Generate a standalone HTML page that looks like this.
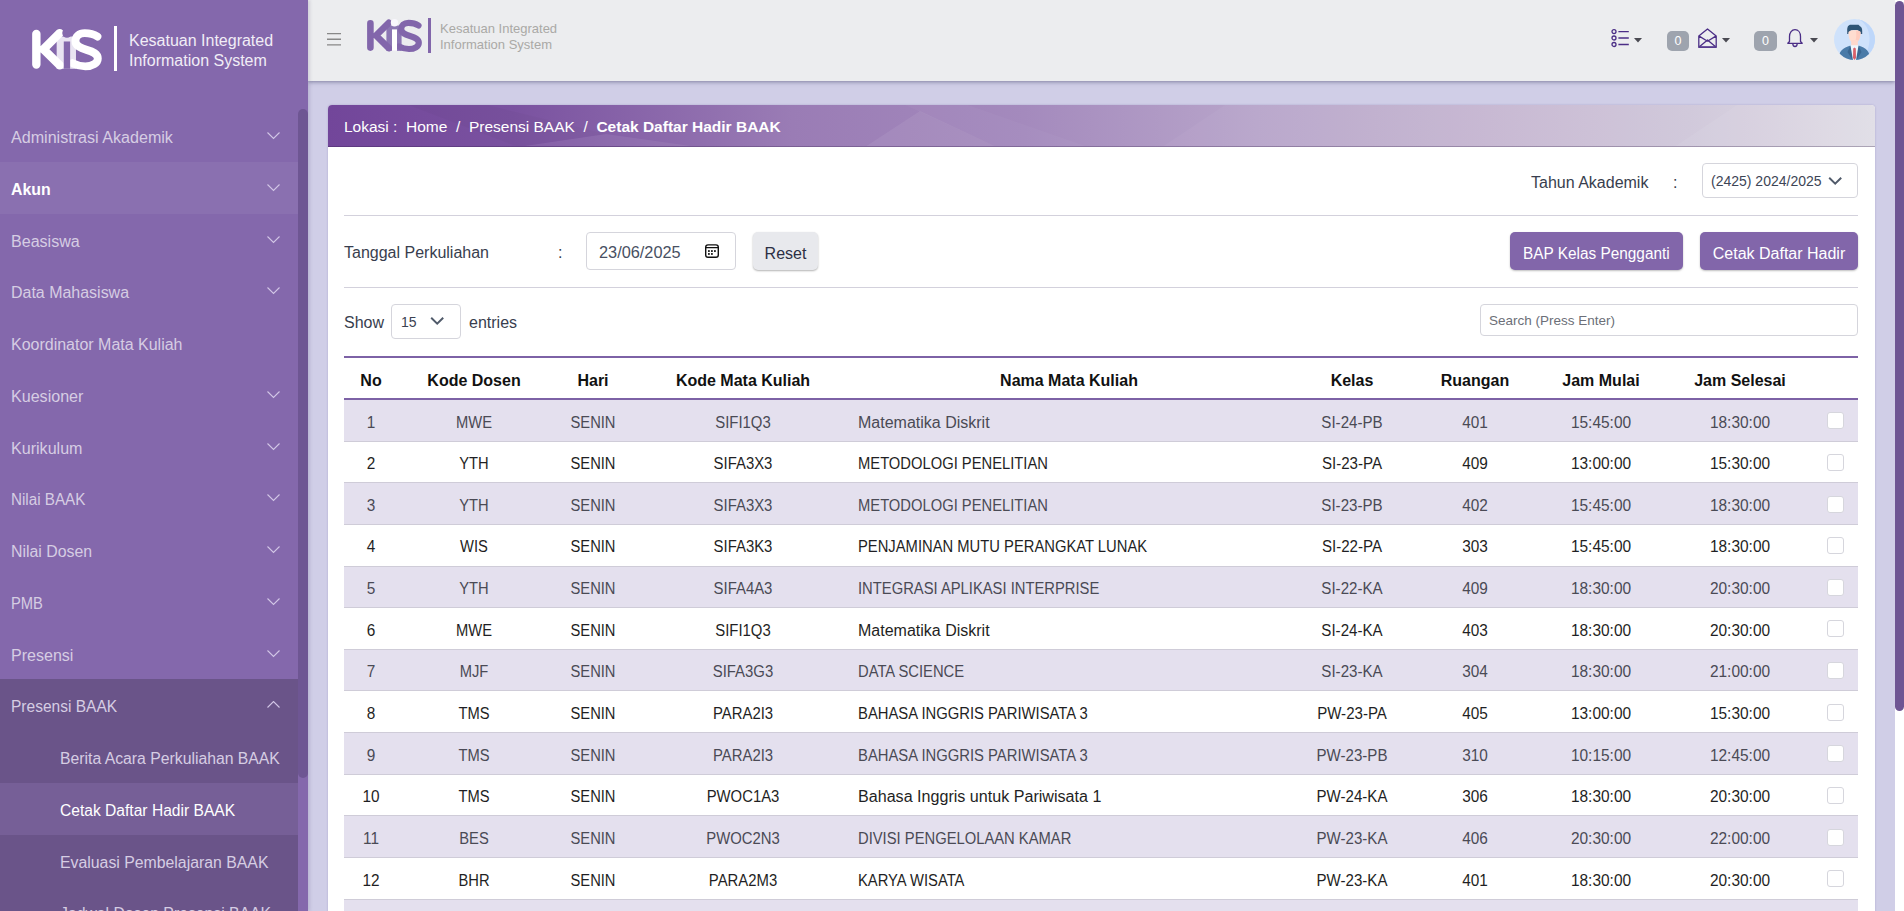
<!DOCTYPE html>
<html><head><meta charset="utf-8">
<style>
*{box-sizing:border-box;margin:0;padding:0}
html,body{width:1904px;height:911px;overflow:hidden}
body{font-family:"Liberation Sans",sans-serif;background:#d0cee7;position:relative;color:#212529}
.a{position:absolute;white-space:nowrap}
#sb{position:absolute;left:0;top:0;width:308px;height:911px;background:#8468ac;overflow:hidden;box-shadow:2px 0 3px rgba(60,50,100,.15);z-index:2}
.mi{position:absolute;left:0;width:298px;height:52px;font-size:16px}
.mi span{position:absolute;top:19px;white-space:nowrap;line-height:18px}
.mi svg{position:absolute}
#hdr{position:absolute;left:308px;top:0;width:1587px;height:81px;background:#ecedef;box-shadow:0 1px 4px rgba(50,50,90,.5)}
#vscroll{position:absolute;left:1895px;top:0;width:9px;height:911px;background:#fff}
#card{position:absolute;left:328px;top:105px;width:1547px;height:830px;background:#fff;border-radius:4px 4px 0 0;overflow:hidden;box-shadow:0 0 2px rgba(90,80,150,.35)}
#bc{position:absolute;left:0;top:0;width:1547px;height:42px;background:linear-gradient(90deg,#72469a 0%,#7a52a0 12%,#9a7cb5 30%,#a48abd 45%,#b8a5ca 60%,#c6b7d2 75%,#d0c7da 88%,#dfdce5 100%);border-bottom:1px solid rgba(40,20,60,.28);overflow:hidden}
.hl{position:absolute;left:16px;width:1514px;height:1px;background:#d3d1dc}
.btnp{position:absolute;background:#8266aa;color:#fff;border-radius:5px;font-size:16px;line-height:38px;padding-top:3px;text-align:center;box-shadow:0 1px 2px rgba(0,0,0,.25)}
.inp{position:absolute;border:1px solid #d5d5dc;border-radius:4px;background:#fff}
#tbl{position:absolute;left:16px;top:251px;width:1514px;height:600px}
.tr{position:absolute;left:0;width:1514px;height:41.64px;border-bottom:1px solid #cfccd8}
.td{position:absolute;top:14.5px;font-size:16px;line-height:16px;white-space:nowrap}
.td.c{width:200px;text-align:center}
.th{position:absolute;top:17px;font-size:16px;line-height:16px;font-weight:bold;color:#111;width:200px;text-align:center;white-space:nowrap}
.cb{position:absolute;top:12.3px;width:17px;height:17px;border:1px solid #d6d6dd;border-radius:3px;background:#fff}
</style></head><body>

<div id="sb">
  <svg class="a" style="left:31.8px;top:26.7px" width="92" height="48" viewBox="0 0 72.4 37.8">
    <rect x="19.4" y="7.5" width="15.2" height="25.4" fill="#e9e4f2"/>
    <path d="M3.4 5.4 V29.6 M9 17.5 L21.8 4.8 M9 17.5 L21.8 30.1" stroke="#fff" stroke-width="6.6" stroke-linecap="round" fill="none"/>
    <path d="M51.5 7.5 C48.5 5.5 45 4.8 41.5 4.8 C37 4.8 34.2 7.5 34.2 11 C34.2 15 38 16.5 43 18 C48 19.5 51.8 21 51.8 24.8 C51.8 28.5 47.5 31 42 31 C38 31 35 30 32 28.5" stroke="#fff" stroke-width="6.2" stroke-linecap="round" fill="none"/>
    <rect x="25" y="11.4" width="5" height="21.5" fill="#8468ac"/>
    <circle cx="27.5" cy="4.8" r="3.7" fill="#8468ac"/>
  </svg>
  <div class="a" style="left:114px;top:26px;width:3px;height:45px;background:#fff"></div>
  <div class="a" style="left:129px;top:31px;font-size:16px;line-height:19.5px;color:#f1edf6">Kesatuan Integrated<br>Information System</div>
  <div class="mi" style="top:110.00px;"><span style="left:11px;color:#d6cde3;font-weight:normal;transform:scaleX(1.006);transform-origin:0 0">Administrasi Akademik</span><svg width="14" height="8" style="left:267px;top:22px"><path d="M0.5 0.5 L6.5 6.5 L12.5 0.5" fill="none" stroke="#d2c6e6" stroke-width="1.1"/></svg></div>
<div class="mi" style="top:161.75px;background:#8a70b0;"><span style="left:11px;color:#ffffff;font-weight:bold;transform:scaleX(0.991);transform-origin:0 0">Akun</span><svg width="14" height="8" style="left:267px;top:22px"><path d="M0.5 0.5 L6.5 6.5 L12.5 0.5" fill="none" stroke="#d2c6e6" stroke-width="1.1"/></svg></div>
<div class="mi" style="top:213.50px;"><span style="left:11px;color:#d6cde3;font-weight:normal;transform:scaleX(1.004);transform-origin:0 0">Beasiswa</span><svg width="14" height="8" style="left:267px;top:22px"><path d="M0.5 0.5 L6.5 6.5 L12.5 0.5" fill="none" stroke="#d2c6e6" stroke-width="1.1"/></svg></div>
<div class="mi" style="top:265.25px;"><span style="left:11px;color:#d6cde3;font-weight:normal;transform:scaleX(0.998);transform-origin:0 0">Data Mahasiswa</span><svg width="14" height="8" style="left:267px;top:22px"><path d="M0.5 0.5 L6.5 6.5 L12.5 0.5" fill="none" stroke="#d2c6e6" stroke-width="1.1"/></svg></div>
<div class="mi" style="top:317.00px;"><span style="left:11px;color:#d6cde3;font-weight:normal;transform:scaleX(0.999);transform-origin:0 0">Koordinator Mata Kuliah</span></div>
<div class="mi" style="top:368.75px;"><span style="left:11px;color:#d6cde3;font-weight:normal;transform:scaleX(1.005);transform-origin:0 0">Kuesioner</span><svg width="14" height="8" style="left:267px;top:22px"><path d="M0.5 0.5 L6.5 6.5 L12.5 0.5" fill="none" stroke="#d2c6e6" stroke-width="1.1"/></svg></div>
<div class="mi" style="top:420.50px;"><span style="left:11px;color:#d6cde3;font-weight:normal;transform:scaleX(1.005);transform-origin:0 0">Kurikulum</span><svg width="14" height="8" style="left:267px;top:22px"><path d="M0.5 0.5 L6.5 6.5 L12.5 0.5" fill="none" stroke="#d2c6e6" stroke-width="1.1"/></svg></div>
<div class="mi" style="top:472.25px;"><span style="left:11px;color:#d6cde3;font-weight:normal;transform:scaleX(0.950);transform-origin:0 0">Nilai BAAK</span><svg width="14" height="8" style="left:267px;top:22px"><path d="M0.5 0.5 L6.5 6.5 L12.5 0.5" fill="none" stroke="#d2c6e6" stroke-width="1.1"/></svg></div>
<div class="mi" style="top:524.00px;"><span style="left:11px;color:#d6cde3;font-weight:normal;transform:scaleX(0.991);transform-origin:0 0">Nilai Dosen</span><svg width="14" height="8" style="left:267px;top:22px"><path d="M0.5 0.5 L6.5 6.5 L12.5 0.5" fill="none" stroke="#d2c6e6" stroke-width="1.1"/></svg></div>
<div class="mi" style="top:575.75px;"><span style="left:11px;color:#d6cde3;font-weight:normal;transform:scaleX(0.920);transform-origin:0 0">PMB</span><svg width="14" height="8" style="left:267px;top:22px"><path d="M0.5 0.5 L6.5 6.5 L12.5 0.5" fill="none" stroke="#d2c6e6" stroke-width="1.1"/></svg></div>
<div class="mi" style="top:627.50px;"><span style="left:11px;color:#d6cde3;font-weight:normal;transform:scaleX(1.003);transform-origin:0 0">Presensi</span><svg width="14" height="8" style="left:267px;top:22px"><path d="M0.5 0.5 L6.5 6.5 L12.5 0.5" fill="none" stroke="#d2c6e6" stroke-width="1.1"/></svg></div>
<div class="mi" style="top:679.25px;background:#6a5489;"><span style="left:11px;color:#d6cde3;font-weight:normal;transform:scaleX(0.970);transform-origin:0 0">Presensi BAAK</span><svg width="14" height="8" style="left:267px;top:22px"><path d="M0.5 6.5 L6.5 0.5 L12.5 6.5" fill="none" stroke="#d2c6e6" stroke-width="1.1"/></svg></div>
<div class="mi" style="top:731.00px;background:#6a5489;"><span style="left:60px;color:#d6cde3;font-weight:normal;transform:scaleX(0.985);transform-origin:0 0">Berita Acara Perkuliahan BAAK</span></div>
<div class="mi" style="top:782.75px;background:#765f97;"><span style="left:60px;color:#ffffff;font-weight:normal;transform:scaleX(0.975);transform-origin:0 0">Cetak Daftar Hadir BAAK</span></div>
<div class="mi" style="top:834.50px;background:#6a5489;"><span style="left:60px;color:#d6cde3;font-weight:normal;transform:scaleX(0.989);transform-origin:0 0">Evaluasi Pembelajaran BAAK</span></div>
<div class="mi" style="top:886.25px;background:#6a5489;"><span style="left:60px;color:#d6cde3;font-weight:normal;transform:scaleX(0.985);transform-origin:0 0">Jadwal Dosen Presensi BAAK</span></div>
  <div class="a" style="left:298px;top:109px;width:10px;height:669px;background:#6e5693;border-radius:5px"></div>
</div>

<div id="hdr">
  <svg class="a" style="left:18px;top:32px" width="16" height="14"><path d="M1 1.6H15M1 7.3H15M1 12.9H15" stroke="#888" stroke-width="1.4"/></svg>
  <svg class="a" style="left:59px;top:18px" width="64" height="36" viewBox="0 0 64 36">
    <rect x="19.4" y="7.5" width="15.2" height="25.4" fill="#8b76b3"/>
    <path d="M3.4 5.4 V29.6 M9 17.5 L21.8 4.8 M9 17.5 L21.8 30.1" stroke="#8266ab" stroke-width="6.6" stroke-linecap="round" fill="none"/>
    <path d="M51.5 7.5 C48.5 5.5 45 4.8 41.5 4.8 C37 4.8 34.2 7.5 34.2 11 C34.2 15 38 16.5 43 18 C48 19.5 51.8 21 51.8 24.8 C51.8 28.5 47.5 31 42 31 C38 31 35 30 32 28.5" stroke="#8266ab" stroke-width="6.2" stroke-linecap="round" fill="none"/>
    <rect x="25" y="11.4" width="5" height="21.5" fill="#ffffff"/>
    <circle cx="27.5" cy="4.8" r="3.7" fill="#f9f7fd"/>
    <rect x="61" y="0" width="3" height="35" fill="#8266ab"/>
  </svg>
  <div class="a" style="left:132px;top:21px;font-size:13px;line-height:15.5px;color:#aaa9a6">Kesatuan Integrated<br>Information System</div>

  <!-- list icon -->
  <svg class="a" style="left:1303px;top:27px" width="22" height="21">
    <g fill="none" stroke="#4b2e86" stroke-width="1.3"><circle cx="3" cy="4.6" r="2"/><circle cx="3" cy="11" r="2"/><circle cx="3" cy="17.5" r="2"/></g>
    <path d="M7.4 4.6H17.8M7.4 11H17.8M7.4 17.5H17.8" stroke="#4b2e86" stroke-width="1.4"/>
  </svg>
  <svg class="a" style="left:1326px;top:38px" width="9" height="6"><path d="M0 0H8L4 4.5Z" fill="#4a4a52"/></svg>
  <div class="a" style="left:1359px;top:31px;width:22px;height:20px;border-radius:5px;background:#9ea4ae;color:#fff;font-size:12.5px;line-height:21px;text-align:center">0</div>
  <svg class="a" style="left:1389px;top:28px" width="22" height="21"><path d="M1.8 19.3V7.9L10.5 1L19.2 7.9V19.3Z M1.8 7.9L10.5 13.2L19.2 7.9 M1.8 19.3L10.5 12L19.2 19.3" fill="none" stroke="#4b2e86" stroke-width="1.3" stroke-linejoin="round"/><path d="M1.8 19H19.2" stroke="#5a3f92" stroke-width="1.6"/></svg>
  <svg class="a" style="left:1414px;top:38px" width="9" height="6"><path d="M0 0H8L4 4.5Z" fill="#4a4a52"/></svg>
  <div class="a" style="left:1446px;top:31px;width:23px;height:20px;border-radius:5px;background:#9ea4ae;color:#fff;font-size:12.5px;line-height:21px;text-align:center">0</div>
  <svg class="a" style="left:1478px;top:28px" width="18" height="20">
    <path d="M3.5 13.5V8.5C3.5 4.5 5.8 1.6 9 1.6C12.2 1.6 14.5 4.5 14.5 8.5V13.5L16.2 15.3H1.8Z M6.8 15.5C6.8 17.5 7.8 18.5 9 18.5C10.2 18.5 11.2 17.5 11.2 15.5" fill="none" stroke="#4b2e86" stroke-width="1.3" stroke-linejoin="round"/>
  </svg>
  <svg class="a" style="left:1502px;top:38px" width="9" height="6"><path d="M0 0H8L4 4.5Z" fill="#4a4a52"/></svg>
  <svg class="a" style="left:1526px;top:19px" width="41" height="41" viewBox="0 0 41 41">
    <defs><clipPath id="cc"><circle cx="20.5" cy="20.5" r="20.5"/></clipPath></defs>
    <g clip-path="url(#cc)">
      <rect width="41" height="41" fill="#cfe2fb"/>
      <path d="M20.5 -1 C30 1 36 10 35.5 21 C35.2 28 33 34 30 38 L44 44 L44 -2Z" fill="#bed7fa"/>
      <path d="M13.2 12 C13.2 8 14 5.8 17 5.8 H24.5 L26 7.2 C27.6 8 28.2 9.5 28.2 12 V15 L26.5 15 C26 11.5 23.5 11 20.5 11 C17.5 11 15 11.5 14.5 15 L13.2 15Z" fill="#2f5677"/>
      <path d="M14.5 13 C14.5 19.5 16 23.5 20.3 23.6 C24.6 23.5 26.5 19.5 26.5 13 C25.5 11.5 23 11.2 20.5 11.2 C18 11.2 15.5 11.5 14.5 13Z" fill="#ffddd0"/>
      <path d="M22 11.5 C24.5 11.8 26.3 12.5 26.5 13 C26.5 19.5 24.6 23.5 20.3 23.6 C22.5 21 22.5 16 22 11.5Z" fill="#ffcdbf"/>
      <rect x="17.2" y="21" width="6.6" height="7" fill="#ffd8cb"/>
      <path d="M4.5 41 C4.5 32 9 28.8 16.5 26.5 L20.5 41Z M36 41 C36 32 32 28.8 24.5 26.5 L20.5 41Z" fill="#4a7ba8"/>
      <path d="M16.5 26.5 L18.5 41 L13.5 33 Z M24.5 26.5 L22.5 41 L27.5 33Z" fill="#3b6791"/>
      <path d="M16.5 26.2 H24.5 L22 41 H19Z" fill="#eef6fb"/>
      <path d="M19.2 29.5 L20.5 28.5 L21.8 29.5 L22 39 L20.5 41 L19 39Z" fill="#d8606a"/>
    </g>
  </svg>
</div>

<div id="card">
  <div id="bc">
    <svg class="a" style="left:0;top:0" width="1547" height="42">
      <polygon points="190,42 278,29 370,42" fill="rgba(255,255,255,.07)"/>
      <polygon points="80,0 160,0 278,29 190,42" fill="rgba(0,0,0,.02)"/>
      <polygon points="537,42 592,6 669,42" fill="rgba(255,255,255,.07)"/>
      <polygon points="577,0 669,42 760,42 640,0" fill="rgba(255,255,255,.03)"/>
      <polygon points="834,42 897,0 1547,0 1547,42" fill="rgba(255,255,255,.04)"/>
      <polygon points="1346,42 1409,0 1547,0 1547,42" fill="rgba(255,255,255,.06)"/>
    </svg>
    <div class="a" style="left:16px;top:13px;font-size:15.5px;line-height:17px;color:#fff">Lokasi :&nbsp; Home&nbsp; /&nbsp; Presensi BAAK&nbsp; /&nbsp; <b>Cetak Daftar Hadir BAAK</b></div>
  </div>

  <!-- tahun akademik -->
  <div class="a" style="left:1203px;top:69px;font-size:16px;line-height:18px;color:#383e4e">Tahun Akademik</div>
  <div class="a" style="left:1345px;top:69px;font-size:16px;line-height:18px;color:#383e4e">:</div>
  <div class="inp" style="left:1374px;top:58px;width:156px;height:35px"></div>
  <div class="a" style="left:1383px;top:68px;font-size:14px;line-height:16px;color:#3d4556">(2425) 2024/2025</div>
  <svg class="a" style="left:1500px;top:71px" width="16" height="10"><path d="M1.2 1.8L7.2 7.6L13.2 1.8" fill="none" stroke="#505a6a" stroke-width="2"/></svg>
  <div class="hl" style="top:110px"></div>

  <!-- tanggal -->
  <div class="a" style="left:16px;top:139px;font-size:16px;line-height:18px;color:#383e4e">Tanggal Perkuliahan</div>
  <div class="a" style="left:230px;top:139px;font-size:16px;line-height:18px;color:#383e4e">:</div>
  <div class="inp" style="left:258px;top:127px;width:150px;height:38px"></div>
  <div class="a" style="left:271px;top:138.5px;font-size:16px;line-height:18px;color:#485062;transform:scaleX(1.02);transform-origin:0 0">23/06/2025</div>
  <svg class="a" style="left:376px;top:138px" width="16" height="16"><rect x="1.7" y="1.9" width="12.6" height="12.4" rx="2.3" fill="none" stroke="#111" stroke-width="1.4"/><path d="M1.7 4.6H14.3" stroke="#111" stroke-width="1.2"/><g fill="#111"><rect x="4" y="7.2" width="1.8" height="1.7"/><rect x="7" y="7.2" width="1.8" height="1.7"/><rect x="10" y="7.2" width="1.8" height="1.7"/><rect x="4" y="10.1" width="1.8" height="1.7"/><rect x="7" y="10.1" width="1.8" height="1.7"/></g></svg>
  <div class="a" style="left:425px;top:127px;width:65px;height:38px;border-radius:5px;background:#e8e9ed;box-shadow:0 1px 2px rgba(0,0,0,.3);font-size:16px;line-height:38px;padding-top:3px;text-align:center;color:#2c3044">Reset</div>
  <div class="btnp" style="left:1182px;top:127px;width:173px;height:38px"><span style="display:inline-block;transform:scaleX(.96)">BAP Kelas Pengganti</span></div>
  <div class="btnp" style="left:1372px;top:127px;width:158px;height:38px">Cetak Daftar Hadir</div>
  <div class="hl" style="top:182px"></div>

  <!-- show entries -->
  <div class="a" style="left:16px;top:209px;font-size:16px;line-height:18px;color:#383e4e">Show</div>
  <div class="inp" style="left:63px;top:199px;width:70px;height:35px"></div>
  <div class="a" style="left:73px;top:209px;font-size:14px;line-height:16px;color:#3b4252">15</div>
  <svg class="a" style="left:102px;top:211px" width="16" height="10"><path d="M1.2 1.8L7.2 7.6L13.2 1.8" fill="none" stroke="#505a6a" stroke-width="2"/></svg>
  <div class="a" style="left:141px;top:209px;font-size:16px;line-height:18px;color:#383e4e">entries</div>
  <div class="inp" style="left:1152px;top:199px;width:378px;height:32px"></div>
  <div class="a" style="left:1161px;top:207.5px;font-size:13.5px;line-height:16px;color:#6c6f78">Search (Press Enter)</div>

  <div id="tbl">
    <div class="a" style="left:0;top:0;width:1514px;height:2px;background:#7d62a6"></div>
    <div class="th" style="left:-73px">No</div>
    <div class="th" style="left:30px">Kode Dosen</div>
    <div class="th" style="left:149px">Hari</div>
    <div class="th" style="left:299px">Kode Mata Kuliah</div>
    <div class="th" style="left:625px">Nama Mata Kuliah</div>
    <div class="th" style="left:908px">Kelas</div>
    <div class="th" style="left:1031px">Ruangan</div>
    <div class="th" style="left:1157px">Jam Mulai</div>
    <div class="th" style="left:1296px">Jam Selesai</div>
    <div class="a" style="left:0;top:42px;width:1514px;height:2px;background:#7d62a6"></div>
    <div class="a" style="left:0;top:44px;width:1514px;height:600px">
<div class="tr" style="top:0.00px;background:#e4e0ee;color:#4a4a55"><span class="td c" style="left:-73px;transform:scaleX(0.960)">1</span><span class="td c" style="left:30px;transform:scaleX(0.920)">MWE</span><span class="td c" style="left:149px;transform:scaleX(0.920)">SENIN</span><span class="td c" style="left:299px;transform:scaleX(0.932)">SIFI1Q3</span><span class="td" style="left:514px;transform:scaleX(1.000);transform-origin:0 0">Matematika Diskrit</span><span class="td c" style="left:908px;transform:scaleX(0.944)">SI-24-PB</span><span class="td c" style="left:1031px;transform:scaleX(0.960)">401</span><span class="td c" style="left:1157px;transform:scaleX(0.966)">15:45:00</span><span class="td c" style="left:1296px;transform:scaleX(0.966)">18:30:00</span><span class="cb" style="left:1483px"></span></div>
<div class="tr" style="top:41.64px;background:#ffffff;color:#1f1f24"><span class="td c" style="left:-73px;transform:scaleX(0.960)">2</span><span class="td c" style="left:30px;transform:scaleX(0.920)">YTH</span><span class="td c" style="left:149px;transform:scaleX(0.920)">SENIN</span><span class="td c" style="left:299px;transform:scaleX(0.931)">SIFA3X3</span><span class="td" style="left:514px;transform:scaleX(0.922);transform-origin:0 0">METODOLOGI PENELITIAN</span><span class="td c" style="left:908px;transform:scaleX(0.944)">SI-23-PA</span><span class="td c" style="left:1031px;transform:scaleX(0.960)">409</span><span class="td c" style="left:1157px;transform:scaleX(0.966)">13:00:00</span><span class="td c" style="left:1296px;transform:scaleX(0.966)">15:30:00</span><span class="cb" style="left:1483px"></span></div>
<div class="tr" style="top:83.28px;background:#e4e0ee;color:#4a4a55"><span class="td c" style="left:-73px;transform:scaleX(0.960)">3</span><span class="td c" style="left:30px;transform:scaleX(0.920)">YTH</span><span class="td c" style="left:149px;transform:scaleX(0.920)">SENIN</span><span class="td c" style="left:299px;transform:scaleX(0.931)">SIFA3X3</span><span class="td" style="left:514px;transform:scaleX(0.922);transform-origin:0 0">METODOLOGI PENELITIAN</span><span class="td c" style="left:908px;transform:scaleX(0.944)">SI-23-PB</span><span class="td c" style="left:1031px;transform:scaleX(0.960)">402</span><span class="td c" style="left:1157px;transform:scaleX(0.966)">15:45:00</span><span class="td c" style="left:1296px;transform:scaleX(0.966)">18:30:00</span><span class="cb" style="left:1483px"></span></div>
<div class="tr" style="top:124.92px;background:#ffffff;color:#1f1f24"><span class="td c" style="left:-73px;transform:scaleX(0.960)">4</span><span class="td c" style="left:30px;transform:scaleX(0.920)">WIS</span><span class="td c" style="left:149px;transform:scaleX(0.920)">SENIN</span><span class="td c" style="left:299px;transform:scaleX(0.931)">SIFA3K3</span><span class="td" style="left:514px;transform:scaleX(0.923);transform-origin:0 0">PENJAMINAN MUTU PERANGKAT LUNAK</span><span class="td c" style="left:908px;transform:scaleX(0.944)">SI-22-PA</span><span class="td c" style="left:1031px;transform:scaleX(0.960)">303</span><span class="td c" style="left:1157px;transform:scaleX(0.966)">15:45:00</span><span class="td c" style="left:1296px;transform:scaleX(0.966)">18:30:00</span><span class="cb" style="left:1483px"></span></div>
<div class="tr" style="top:166.56px;background:#e4e0ee;color:#4a4a55"><span class="td c" style="left:-73px;transform:scaleX(0.960)">5</span><span class="td c" style="left:30px;transform:scaleX(0.920)">YTH</span><span class="td c" style="left:149px;transform:scaleX(0.920)">SENIN</span><span class="td c" style="left:299px;transform:scaleX(0.931)">SIFA4A3</span><span class="td" style="left:514px;transform:scaleX(0.923);transform-origin:0 0">INTEGRASI APLIKASI INTERPRISE</span><span class="td c" style="left:908px;transform:scaleX(0.944)">SI-22-KA</span><span class="td c" style="left:1031px;transform:scaleX(0.960)">409</span><span class="td c" style="left:1157px;transform:scaleX(0.966)">18:30:00</span><span class="td c" style="left:1296px;transform:scaleX(0.966)">20:30:00</span><span class="cb" style="left:1483px"></span></div>
<div class="tr" style="top:208.20px;background:#ffffff;color:#1f1f24"><span class="td c" style="left:-73px;transform:scaleX(0.960)">6</span><span class="td c" style="left:30px;transform:scaleX(0.920)">MWE</span><span class="td c" style="left:149px;transform:scaleX(0.920)">SENIN</span><span class="td c" style="left:299px;transform:scaleX(0.932)">SIFI1Q3</span><span class="td" style="left:514px;transform:scaleX(1.000);transform-origin:0 0">Matematika Diskrit</span><span class="td c" style="left:908px;transform:scaleX(0.944)">SI-24-KA</span><span class="td c" style="left:1031px;transform:scaleX(0.960)">403</span><span class="td c" style="left:1157px;transform:scaleX(0.966)">18:30:00</span><span class="td c" style="left:1296px;transform:scaleX(0.966)">20:30:00</span><span class="cb" style="left:1483px"></span></div>
<div class="tr" style="top:249.84px;background:#e4e0ee;color:#4a4a55"><span class="td c" style="left:-73px;transform:scaleX(0.960)">7</span><span class="td c" style="left:30px;transform:scaleX(0.920)">MJF</span><span class="td c" style="left:149px;transform:scaleX(0.920)">SENIN</span><span class="td c" style="left:299px;transform:scaleX(0.931)">SIFA3G3</span><span class="td" style="left:514px;transform:scaleX(0.923);transform-origin:0 0">DATA SCIENCE</span><span class="td c" style="left:908px;transform:scaleX(0.944)">SI-23-KA</span><span class="td c" style="left:1031px;transform:scaleX(0.960)">304</span><span class="td c" style="left:1157px;transform:scaleX(0.966)">18:30:00</span><span class="td c" style="left:1296px;transform:scaleX(0.966)">21:00:00</span><span class="cb" style="left:1483px"></span></div>
<div class="tr" style="top:291.48px;background:#ffffff;color:#1f1f24"><span class="td c" style="left:-73px;transform:scaleX(0.960)">8</span><span class="td c" style="left:30px;transform:scaleX(0.920)">TMS</span><span class="td c" style="left:149px;transform:scaleX(0.920)">SENIN</span><span class="td c" style="left:299px;transform:scaleX(0.931)">PARA2I3</span><span class="td" style="left:514px;transform:scaleX(0.926);transform-origin:0 0">BAHASA INGGRIS PARIWISATA 3</span><span class="td c" style="left:908px;transform:scaleX(0.941)">PW-23-PA</span><span class="td c" style="left:1031px;transform:scaleX(0.960)">405</span><span class="td c" style="left:1157px;transform:scaleX(0.966)">13:00:00</span><span class="td c" style="left:1296px;transform:scaleX(0.966)">15:30:00</span><span class="cb" style="left:1483px"></span></div>
<div class="tr" style="top:333.12px;background:#e4e0ee;color:#4a4a55"><span class="td c" style="left:-73px;transform:scaleX(0.960)">9</span><span class="td c" style="left:30px;transform:scaleX(0.920)">TMS</span><span class="td c" style="left:149px;transform:scaleX(0.920)">SENIN</span><span class="td c" style="left:299px;transform:scaleX(0.931)">PARA2I3</span><span class="td" style="left:514px;transform:scaleX(0.926);transform-origin:0 0">BAHASA INGGRIS PARIWISATA 3</span><span class="td c" style="left:908px;transform:scaleX(0.941)">PW-23-PB</span><span class="td c" style="left:1031px;transform:scaleX(0.960)">310</span><span class="td c" style="left:1157px;transform:scaleX(0.966)">10:15:00</span><span class="td c" style="left:1296px;transform:scaleX(0.966)">12:45:00</span><span class="cb" style="left:1483px"></span></div>
<div class="tr" style="top:374.76px;background:#ffffff;color:#1f1f24"><span class="td c" style="left:-73px;transform:scaleX(0.960)">10</span><span class="td c" style="left:30px;transform:scaleX(0.920)">TMS</span><span class="td c" style="left:149px;transform:scaleX(0.920)">SENIN</span><span class="td c" style="left:299px;transform:scaleX(0.929)">PWOC1A3</span><span class="td" style="left:514px;transform:scaleX(1.006);transform-origin:0 0">Bahasa Inggris untuk Pariwisata 1</span><span class="td c" style="left:908px;transform:scaleX(0.941)">PW-24-KA</span><span class="td c" style="left:1031px;transform:scaleX(0.960)">306</span><span class="td c" style="left:1157px;transform:scaleX(0.966)">18:30:00</span><span class="td c" style="left:1296px;transform:scaleX(0.966)">20:30:00</span><span class="cb" style="left:1483px"></span></div>
<div class="tr" style="top:416.40px;background:#e4e0ee;color:#4a4a55"><span class="td c" style="left:-73px;transform:scaleX(0.960)">11</span><span class="td c" style="left:30px;transform:scaleX(0.920)">BES</span><span class="td c" style="left:149px;transform:scaleX(0.920)">SENIN</span><span class="td c" style="left:299px;transform:scaleX(0.929)">PWOC2N3</span><span class="td" style="left:514px;transform:scaleX(0.923);transform-origin:0 0">DIVISI PENGELOLAAN KAMAR</span><span class="td c" style="left:908px;transform:scaleX(0.941)">PW-23-KA</span><span class="td c" style="left:1031px;transform:scaleX(0.960)">406</span><span class="td c" style="left:1157px;transform:scaleX(0.966)">20:30:00</span><span class="td c" style="left:1296px;transform:scaleX(0.966)">22:00:00</span><span class="cb" style="left:1483px"></span></div>
<div class="tr" style="top:458.04px;background:#ffffff;color:#1f1f24"><span class="td c" style="left:-73px;transform:scaleX(0.960)">12</span><span class="td c" style="left:30px;transform:scaleX(0.920)">BHR</span><span class="td c" style="left:149px;transform:scaleX(0.920)">SENIN</span><span class="td c" style="left:299px;transform:scaleX(0.930)">PARA2M3</span><span class="td" style="left:514px;transform:scaleX(0.923);transform-origin:0 0">KARYA WISATA</span><span class="td c" style="left:908px;transform:scaleX(0.941)">PW-23-KA</span><span class="td c" style="left:1031px;transform:scaleX(0.960)">401</span><span class="td c" style="left:1157px;transform:scaleX(0.966)">18:30:00</span><span class="td c" style="left:1296px;transform:scaleX(0.966)">20:30:00</span><span class="cb" style="left:1483px"></span></div>
<div class="tr" style="top:499.68px;background:#e4e0ee;color:#4a4a55"><span class="td c" style="left:-73px;transform:scaleX(0.960)">13</span><span class="cb" style="left:1483px"></span></div>
    </div>
  </div>
</div>

<div id="vscroll"><div style="position:absolute;left:0;top:0;width:9px;top:1px;height:710px;background:#6e5593;border-radius:5px"></div></div>
</body></html>
